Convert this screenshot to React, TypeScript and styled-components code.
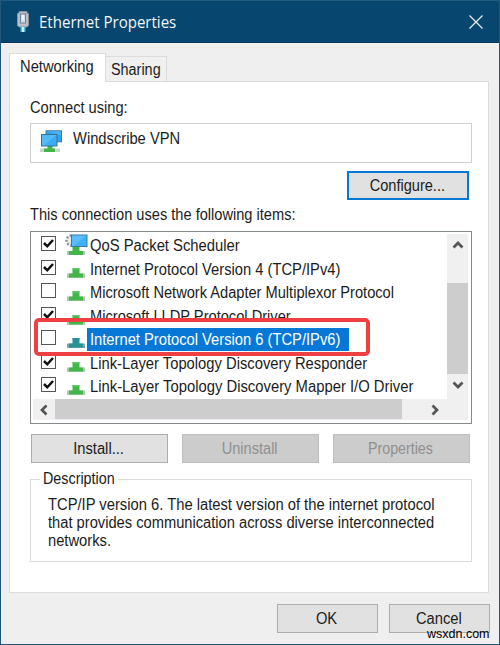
import React from 'react';
import styled, { createGlobalStyle, css } from 'styled-components';

const Global = createGlobalStyle`
  *, *::before, *::after { box-sizing: border-box; }
  body { margin: 0; background: #efefef; overflow: hidden; }
`;

const Window = styled.main`
  width: 500px;
  height: 645px;
  display: flex;
  flex-direction: column;
  position: relative;
  background: #efefef;
  border: 1px solid #24567a;
  border-top-color: #245b80;
  font: 16px/18px "Liberation Sans", Arial, sans-serif;
  color: #1c1c1c;
`;

const TitleBar = styled.header`
  height: 42px;
  flex: none;
  display: flex;
  align-items: center;
  padding: 0 15px 0 15px;
  background: #06466f;
  border-bottom: 1px solid #053a5e;
  color: #f2f7fa;
`;

const Title = styled.h1<{ $fit: number }>`
  margin: 1px 0 0 9px;
  flex: 1;
  font: 400 16px/22px "Open Sans", "Noto Sans", sans-serif;
  white-space: nowrap;
  transform: scaleX(${p => p.$fit});
  transform-origin: left;
`;

/* Condensed UI lettering */
const Text = styled.span<{ $fit?: number; $center?: boolean }>`
  display: inline-block;
  white-space: nowrap;
  transform: scaleX(${p => p.$fit ?? 0.92});
  transform-origin: ${p => (p.$center ? 'center' : 'left')};
`;

const Body = styled.div`
  flex: 1;
  display: flex;
  flex-direction: column;
  padding: 10px 10px 10px 8px;
`;

const Tabs = styled.nav`
  display: flex;
  align-items: flex-end;
  height: 28px;
`;

const Tab = styled.div<{ $active?: boolean }>`
  border: 1px solid #dcdcdc;
  border-bottom: 0;
  ${p =>
    p.$active
      ? css`
          width: 97px;
          height: 29px;
          margin-bottom: -1px;
          padding: 4px 0 0 10px;
          background: #fff;
          z-index: 1;
        `
      : css`
          width: 61px;
          height: 25px;
          padding: 4px 0 0 5px;
          border-left: 0;
          background: #f0f0f0;
        `}
`;

const Panel = styled.section`
  width: 480px;
  height: 512px;
  display: flex;
  flex-direction: column;
  padding: 17px 15px 0 20px;
  background: #fff;
  border: 1px solid #dcdcdc;
`;

const Adapter = styled.div`
  width: 442px;
  height: 40px;
  margin-top: 6px;
  display: flex;
  align-items: flex-start;
  padding: 6px 0 0 9px;
  gap: 10px;
  border: 1px solid #d0d0d0;
`;

const Button = styled.button<{ $w: number; $focus?: boolean }>`
  width: ${p => p.$w}px;
  height: 29px;
  padding: 0 2px 0 0;
  display: flex;
  align-items: center;
  justify-content: center;
  font: inherit;
  color: #1c1c1c;
  background: #e1e1e1;
  border: ${p => (p.$focus ? '2px solid #0878d4' : '1px solid #adadad')};
  &:disabled {
    color: #909090;
    background: #cccccc;
    border-color: #bfbfbf;
  }
`;

const ConfigureRow = styled.div`
  display: flex;
  justify-content: flex-end;
  margin: 8px 4px 6px 0;
`;

const ListBox = styled.div`
  width: 442px;
  height: 193px;
  margin-top: 7px;
  flex: none;
  position: relative;
  display: grid;
  grid-template: 165px 21px / 414px 21px;
  padding: 2px;
  border: 1px solid #858a90;
`;

const Items = styled.ul`
  margin: 0;
  padding: 0 0 0 8px;
  list-style: none;
`;

const Item = styled.li`
  height: 23.5px;
  display: flex;
  align-items: center;
`;

const Check = styled.span`
  width: 15px;
  height: 15px;
  display: flex;
  flex: none;
  margin-top: -4px;
  border: 1px solid #555;
  background: #fff;
`;

const IconSlot = styled.span`
  width: 22px;
  height: 23px;
  margin-left: 8px;
  display: flex;
  flex: none;
`;

const ItemLabel = styled.span<{ $selected?: boolean }>`
  height: 23px;
  padding: 3px 0 0 3px;
  margin-left: 1px;
  ${p =>
    p.$selected &&
    css`
      width: 262px;
      background: #0878d7;
      color: #fff;
    `}
`;

const VScroll = styled.div`
  background: #f0f0f0;
  display: flex;
  flex-direction: column;
`;

const HScroll = styled.div`
  grid-column: 1 / 3;
  background: #f0f0f0;
  display: flex;
`;

const ArrowCell = styled.span`
  width: 22px;
  height: 22px;
  display: grid;
  place-items: center;
`;

const VThumb = styled.div`
  height: 91px;
  margin-top: 27px;
  background: #cdcdcd;
`;

const HThumb = styled.div`
  width: 347px;
  height: 20px;
  background: #cdcdcd;
`;

const Highlight = styled.div`
  position: absolute;
  left: 3px;
  top: 86px;
  width: 336px;
  height: 38px;
  border: 4px solid #ee4043;
  border-radius: 5px;
`;

const ActionRow = styled.div`
  display: flex;
  gap: 14px;
  margin: 10px 0 0 1px;
`;

const Group = styled.fieldset`
  width: 442px;
  height: 92px;
  min-width: 0;
  margin: 7px 0 0;
  padding: 8px 0 0 17px;
  border: 1px solid #dcdcdc;
`;

const Legend = styled.legend<{ $w: number }>`
  width: ${p => p.$w}px;
  margin-left: -8px;
  padding: 0 0 0 3px;
`;

const Line = styled.div`
  height: 18px;
`;

const Footer = styled.footer`
  display: flex;
  justify-content: flex-end;
  gap: 11px;
  margin: 11px -1px 0 0;
`;

const Watermark = styled.span`
  position: absolute;
  left: 426px;
  top: 625px;
  font-size: 12.5px;
  line-height: 16px;
  color: #000;
`;

const PlugIcon = () => (
  <svg width="14" height="24" viewBox="0 0 14 24">
    <path d="M3 1.500h8v2h1.500v12L10.500 17h-7L1.500 15.500v-12H3z" fill="#b8bfca" stroke="#8793a5" />
    <rect x="4.500" y="4" width="5" height="9" fill="#d8dce3" stroke="#718096" />
    <path d="M7 5v5" stroke="#f7fafc" strokeWidth="1.500" />
    <path d="M4.500 17h5v5h-5z" fill="#55b9e4" />
    <path d="M7 17v5" stroke="#c9f1ff" strokeWidth="2" />
  </svg>
);

const CloseIcon = () => (
  <svg width="16" height="16" viewBox="0 0 16 16">
    <path d="M1.500 1.500l13 13M14.500 1.500l-13 13" stroke="#e9f1f6" strokeWidth="1.200" />
  </svg>
);

const AdapterIcon = () => (
  <svg width="23" height="23" viewBox="0 0 23 23" overflow="visible">
    <path d="M0 18.500h20v3.500H0z" fill="#cdd3d0" />
    <path d="M4 18.500h11v3.500H4zM7.500 15h5v5h-5z" fill="#43b649" />
    <rect x="6" y=".8" width="15.500" height="11" fill="#33a3ea" stroke="#3a7ca6" />
    <path d="M6.500 1.300h14.500v4z" fill="#6cc6fb" opacity=".5" />
    <rect x="1.500" y="4.500" width="15.500" height="11.500" fill="#3cadf3" stroke="#33739b" />
    <path d="M2 5h14.500L4 15.500H2z" fill="#72caff" opacity=".45" />
  </svg>
);

const ProtocolIcon = ({ selected = false }: { selected?: boolean }) => (
  <svg width="22" height="23" viewBox="0 0 22 23">
    <path d="M3 15.500h18V20H3z" fill={selected ? '#7ba7b5' : '#b3c4b3'} />
    <path d="M5 15.500h14V20H5zM8.500 10h7v7h-7z" fill={selected ? '#2b9294' : '#43b649'} />
    <path d="M8.500 10h7v1.500h-7z" fill={selected ? '#2f8d9d' : '#63c868'} />
    <path d="M5 19h14v1H5z" fill={selected ? '#4f9ca6' : '#7cc47f'} />
  </svg>
);

const SchedulerIcon = () => (
  <svg width="25" height="23" viewBox="0 0 25 23" overflow="visible">
    <circle cx="7.500" cy="6.500" r="5" fill="#e4edf2" stroke="#8797a3" strokeWidth="2.500" strokeDasharray="2 1.500" />
    <path d="M3 17h18v4H3z" fill="#b3c4b3" />
    <path d="M5 17h14v4H5zM8.500 12h7v7h-7z" fill="#43b649" />
    <rect x="7.500" y="1" width="15.500" height="11.500" fill="#3fb1f5" stroke="#397ba6" />
    <path d="M8 1.500h14.500L10 12H8z" fill="#83d2ff" opacity=".4" />
  </svg>
);

const Tick = () => (
  <svg width="13" height="13" viewBox="0 0 13 13">
    <path d="M2 6l3.300 3.300L11 3" fill="none" stroke="#111" strokeWidth="2.500" />
  </svg>
);

const turns = { up: 0, right: 90, down: 180, left: 270 };
const Arrow = ({ dir }: { dir: keyof typeof turns }) => (
  <svg width="14" height="14" viewBox="0 0 14 14">
    <path d="M2.500 9.500L7 5l4.500 4.500" fill="none" stroke="#555" strokeWidth="2.700" transform={`rotate(${turns[dir]} 7 7)`} />
  </svg>
);

const items = [
  { label: 'QoS Packet Scheduler', on: true, scheduler: true, fit: 0.925 },
  { label: 'Internet Protocol Version 4 (TCP/IPv4)', on: true, fit: 0.92 },
  { label: 'Microsoft Network Adapter Multiplexor Protocol', on: false, fit: 0.914 },
  { label: 'Microsoft LLDP Protocol Driver', on: true, fit: 0.915 },
  { label: 'Internet Protocol Version 6 (TCP/IPv6)', on: false, selected: true, fit: 0.92 },
  { label: 'Link-Layer Topology Discovery Responder', on: true, fit: 0.923 },
  { label: 'Link-Layer Topology Discovery Mapper I/O Driver', on: true, fit: 0.926 },
];

export default function App() {
  return (
    <>
      <Global />
      <Window>
        <TitleBar>
          <PlugIcon />
          <Title $fit={0.94}>Ethernet Properties</Title>
          <CloseIcon />
        </TitleBar>
        <Body>
          <Tabs>
            <Tab $active><Text>Networking</Text></Tab>
            <Tab><Text $fit={0.9}>Sharing</Text></Tab>
          </Tabs>
          <Panel>
            <div><Text $fit={0.915}>Connect using:</Text></div>
            <Adapter>
              <AdapterIcon />
              <Text>Windscribe VPN</Text>
            </Adapter>
            <ConfigureRow>
              <Button $w={122} $focus><Text $center $fit={0.91}>Configure...</Text></Button>
            </ConfigureRow>
            <div><Text $fit={0.913}>This connection uses the following items:</Text></div>
            <ListBox>
              <Items>
                {items.map(item => (
                  <Item key={item.label}>
                    <Check>{item.on && <Tick />}</Check>
                    <IconSlot>{item.scheduler ? <SchedulerIcon /> : <ProtocolIcon selected={item.selected} />}</IconSlot>
                    <ItemLabel $selected={item.selected}><Text $fit={item.fit}>{item.label}</Text></ItemLabel>
                  </Item>
                ))}
              </Items>
              <VScroll>
                <ArrowCell><Arrow dir="up" /></ArrowCell>
                <VThumb />
                <ArrowCell><Arrow dir="down" /></ArrowCell>
              </VScroll>
              <HScroll>
                <ArrowCell><Arrow dir="left" /></ArrowCell>
                <HThumb />
                <ArrowCell />
                <ArrowCell><Arrow dir="right" /></ArrowCell>
              </HScroll>
              <Highlight />
            </ListBox>
            <ActionRow>
              <Button $w={137}><Text $center>Install...</Text></Button>
              <Button $w={137} disabled><Text $center $fit={0.91}>Uninstall</Text></Button>
              <Button $w={137} disabled><Text $center $fit={0.89}>Properties</Text></Button>
            </ActionRow>
            <Group>
              <Legend $w={78}><Text $fit={0.895}>Description</Text></Legend>
              <Line><Text $fit={0.922}>TCP/IP version 6. The latest version of the internet protocol</Text></Line>
              <Line><Text $fit={0.918}>that provides communication across diverse interconnected</Text></Line>
              <Line><Text>networks.</Text></Line>
            </Group>
          </Panel>
          <Footer>
            <Button $w={101}><Text $center>OK</Text></Button>
            <Button $w={101}><Text $center>Cancel</Text></Button>
          </Footer>
        </Body>
        <Watermark>wsxdn.com</Watermark>
      </Window>
    </>
  );
}
